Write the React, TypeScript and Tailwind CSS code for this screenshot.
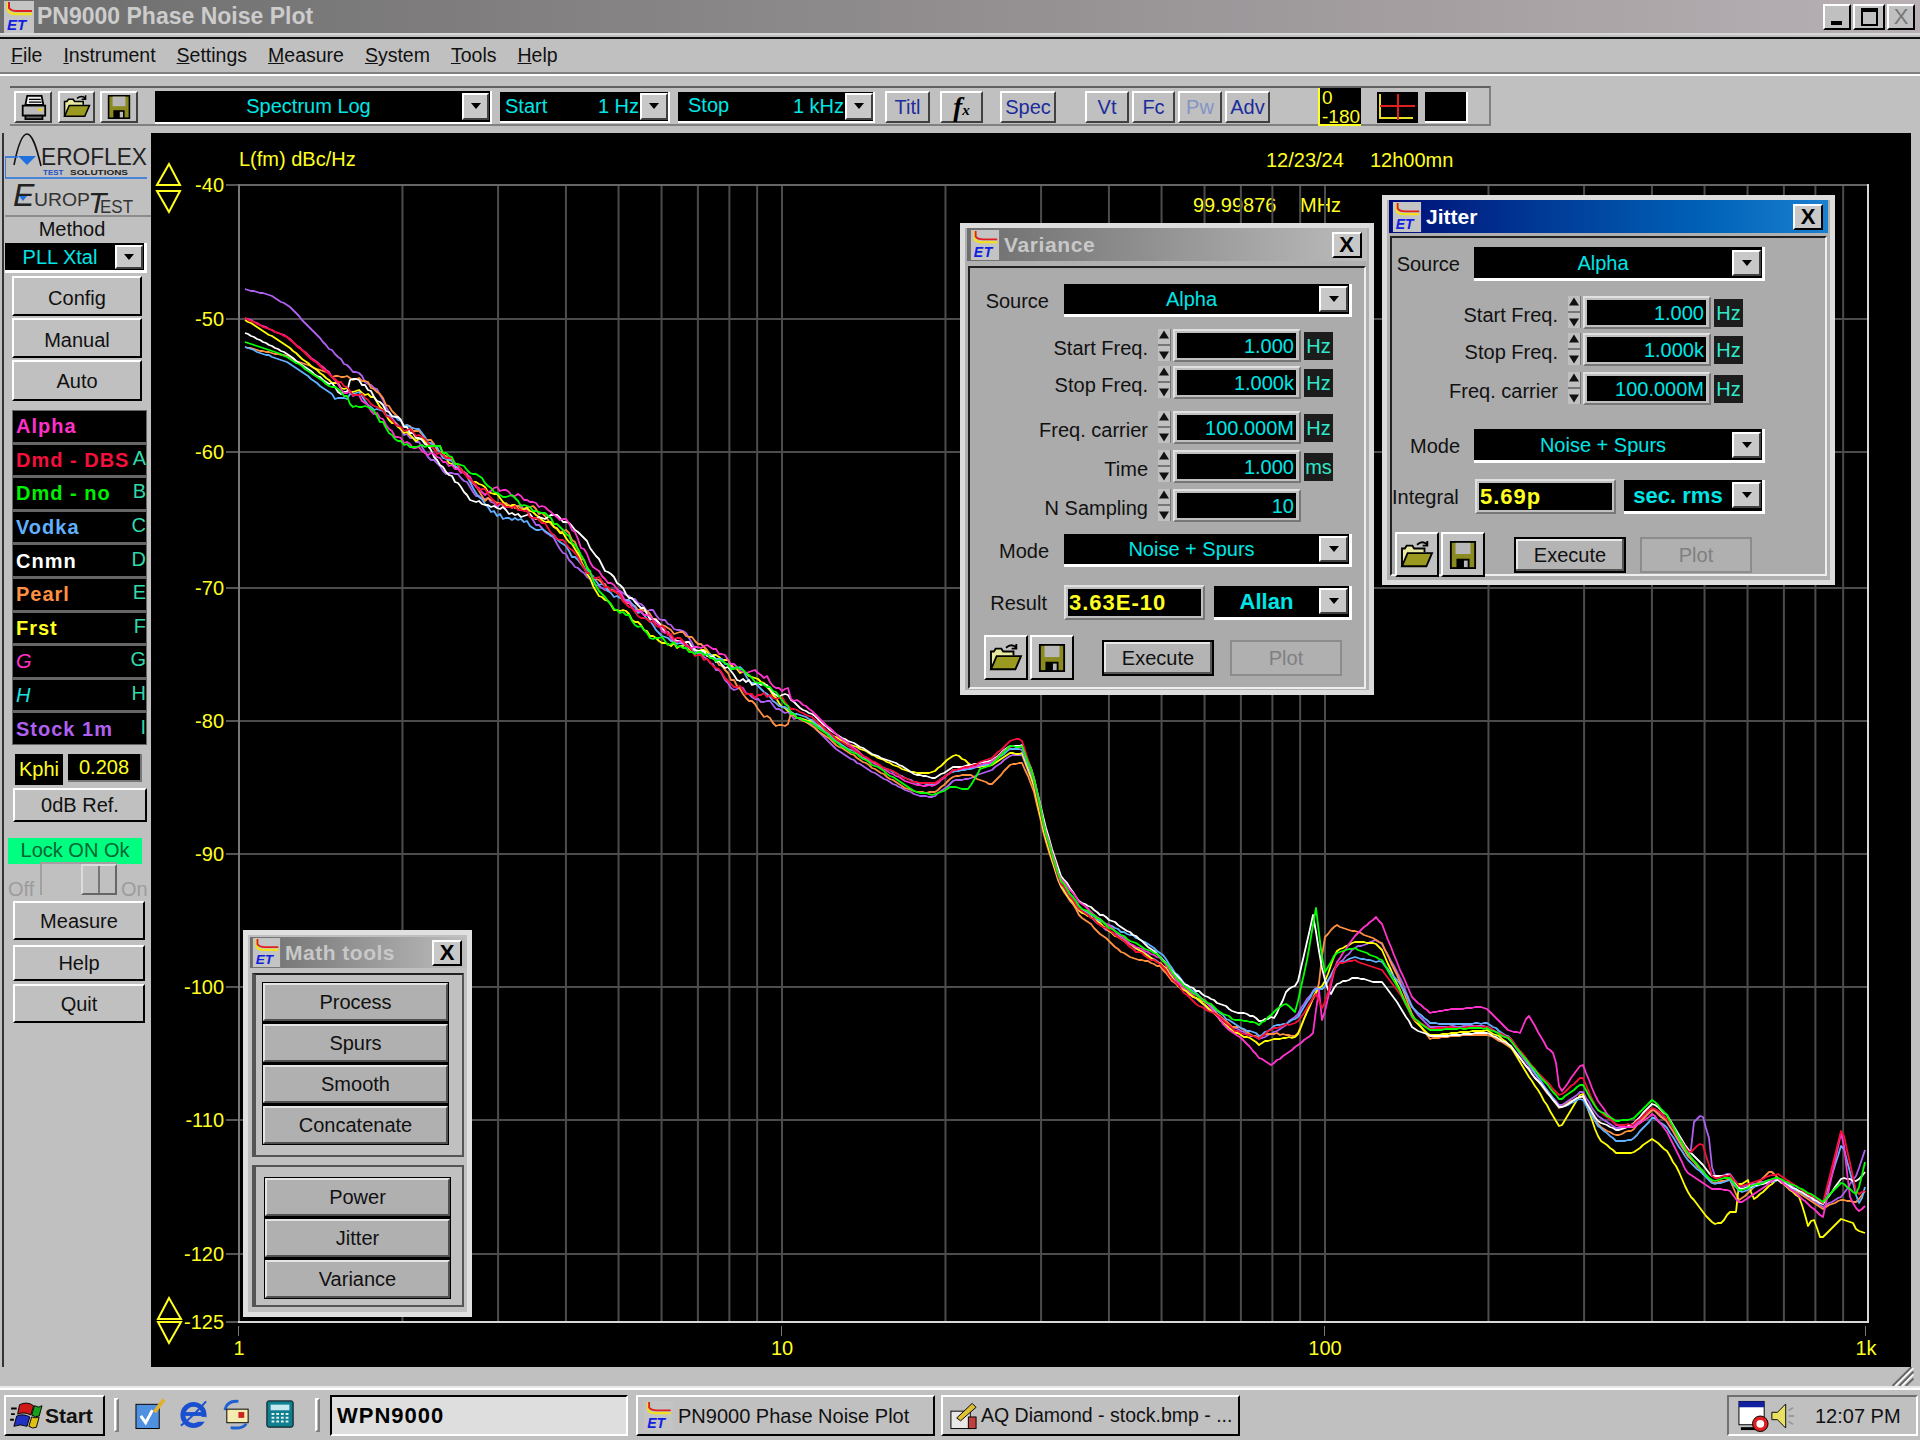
import type { ReactNode } from "react";

// ---- bevels used all over this old windows ui
const raised = "border-2 border-t-white border-l-white border-r-[#404040] border-b-[#404040]";
const raisedBlack = "border-2 border-t-white border-l-white border-r-black border-b-black";
const sunken = "border-2 border-t-[#707070] border-l-[#707070] border-r-white border-b-white";
const cyan = "text-[#00e6e6]";

// ---- plot data, everything in page pixels
const base: number[][] = [
  [245, 325], [287, 345], [333, 380], [375, 408], [395, 423], [437, 447], [479, 487], [528, 517], [567, 543],
  [594, 577], [632, 603], [670, 630], [708, 653], [747, 683], [777, 703], [812, 718], [838, 740], [876, 763],
  [915, 783], [934, 785], [953, 772], [972, 770], [991, 767], [1010, 752], [1022, 752], [1033, 780], [1045, 833],
  [1060, 883], [1079, 910], [1106, 927], [1133, 943], [1160, 957], [1183, 983], [1206, 1000], [1232, 1020],
  [1259, 1030], [1275, 1022], [1297, 1012], [1315, 985], [1324, 985], [1336, 962], [1355, 955], [1382, 962],
  [1400, 990], [1413, 1017], [1430, 1030], [1487, 1030], [1510, 1043], [1533, 1073], [1560, 1107], [1582, 1092],
  [1597, 1117], [1617, 1130], [1633, 1127], [1653, 1108], [1667, 1120], [1687, 1153], [1713, 1180], [1730, 1177],
  [1740, 1190], [1777, 1178], [1800, 1190], [1823, 1203], [1842, 1190], [1857, 1190], [1867, 1175],
];

const traces: { color: string; delta: number[][] }[] = [
  { color: "#b060f0", delta: [[245, -36], [268, -42], [291, -40], [318, -33], [337, -25], [364, -8], [400, 0], [760, 6], [930, 13], [990, 4], [1100, 2], [1280, 8], [1300, 0], [1336, 6], [1376, -20], [1430, -3], [1690, 0], [1694, -40], [1702, -57], [1709, -40], [1713, -5], [1842, 5], [1867, -30]] },
  { color: "#ff9040", delta: [[245, 22], [300, 8], [350, -12], [400, -6], [500, 2], [700, 6], [900, 10], [970, 6], [991, 20], [1007, 15], [1060, 2], [1106, 10], [1133, 15], [1200, 5], [1265, 6], [1297, 25], [1318, 10], [1324, -45], [1351, -25], [1382, -20], [1430, 7], [1510, 3], [1570, 0], [1600, 8], [1653, 3], [1730, 2], [1738, 10], [1770, -10], [1780, 2], [1867, 12]] },
  { color: "#ffff00", delta: [[245, -5], [300, 2], [450, 4], [700, 2], [800, -2], [900, -6], [957, -18], [975, -4], [1100, 5], [1200, 4], [1265, 15], [1297, 25], [1322, 0], [1336, -12], [1376, -18], [1400, 0], [1430, 7], [1500, 0], [1540, 10], [1560, 20], [1582, 0], [1600, 22], [1630, 25], [1653, 30], [1677, 30], [1690, 38], [1722, 43], [1737, 25], [1738, -5], [1748, -8], [1753, 15], [1777, 2], [1800, 10], [1808, 33], [1813, 22], [1820, 37], [1840, 28], [1853, 33], [1867, 58]] },
  { color: "#60b0ff", delta: [[245, 22], [300, 15], [370, 15], [400, 0], [590, 8], [800, 2], [930, 0], [985, 0], [1140, -5], [1297, 5], [1376, 2], [1406, -8], [1487, -8], [1540, -2], [1582, 6], [1597, 8], [1630, 12], [1653, 8], [1740, 2], [1823, 0], [1842, -50], [1860, 18], [1867, 5]] },
  { color: "#ffffff", delta: [[245, 8], [300, 8], [420, 0], [470, 10], [600, -4], [812, 0], [900, -10], [960, -4], [1106, -10], [1160, -2], [1252, -10], [1275, -5], [1286, -25], [1297, -28], [1313, -75], [1320, -30], [1330, 20], [1355, 22], [1374, 22], [1400, 17], [1430, 7], [1500, 2], [1560, 0], [1597, 2], [1653, -5], [1690, -5], [1760, 0], [1823, 3], [1842, -12], [1867, -5]] },
  { color: "#ff33cc", delta: [[245, -7], [287, -8], [333, -4], [430, 0], [520, -6], [610, -6], [700, -2], [900, 2], [1079, -6], [1106, -3], [1206, 5], [1250, 20], [1271, 38], [1297, 35], [1313, 45], [1319, 5], [1322, 35], [1336, 0], [1376, -45], [1400, -22], [1413, -20], [1430, -18], [1480, -23], [1510, -12], [1520, -22], [1528, -51], [1547, -41], [1555, -44], [1560, -12], [1582, -29], [1597, -17], [1617, -5], [1653, 5], [1687, 20], [1713, 10], [1737, 15], [1777, 0], [1823, 14], [1842, -63], [1850, 7], [1860, 25], [1867, 28]] },
  { color: "#f5103c", delta: [[245, -7], [287, -8], [333, -3], [500, -2], [700, 2], [950, -2], [1018, -12], [1040, 0], [1206, 8], [1250, 8], [1275, 5], [1305, 12], [1316, 10], [1322, 25], [1336, 3], [1382, 7], [1430, -3], [1487, -3], [1540, -5], [1582, -14], [1597, -6], [1653, -2], [1690, -5], [1702, -28], [1713, -2], [1777, -3], [1823, 2], [1842, -63], [1857, 5], [1867, 14]] },
  { color: "#00ff00", delta: [[245, 17], [300, 10], [340, 8], [420, 5], [520, 4], [700, 4], [880, 2], [930, 8], [968, 18], [980, 0], [1010, -6], [1200, 0], [1232, -2], [1265, -5], [1285, -15], [1295, -2], [1308, -40], [1316, -77], [1324, -10], [1400, 0], [1653, -8], [1700, 0], [1823, 0], [1842, -8], [1857, 5], [1867, -22]] },
];

const lerp = (pts: number[][], x: number) => {
  if (x <= pts[0][0]) return pts[0][1];
  for (let i = 1; i < pts.length; i++) {
    if (x <= pts[i][0]) {
      const t = (x - pts[i - 1][0]) / (pts[i][0] - pts[i - 1][0]);
      return pts[i - 1][1] + (pts[i][1] - pts[i - 1][1]) * t;
    }
  }
  return pts[pts.length - 1][1];
};

const noiseAmp = (x: number) => (x < 330 ? 0.5 : x < 800 ? 7 : x < 1040 ? 1.2 : x < 1300 ? 2.4 : 0.9);
const slowAmp = (x: number) => (x < 350 ? 0 : x < 790 ? 8 : 1);

function tracePath(delta: number[][], idx: number) {
  let seed = 7919 * (idx + 3);
  let walk = 0;
  const out: string[] = [];
  for (let x = 245; x <= 1867; x += 3) {
    seed = (seed * 16807) % 2147483647;
    walk = walk * 0.9 + (seed / 2147483647 - 0.5) * noiseAmp(x);
    const wob = Math.sin(x / (22 + idx * 3) + idx * 1.7) + 0.6 * Math.sin(x / (61 - idx * 4) + idx);
    const y = lerp(base, x) + lerp(delta, x) + walk + wob * slowAmp(x);
    out.push(`${x},${Math.round(y)}`);
  }
  return "M" + out.join("L");
}

// plot grid
const decadeX = (n: number) => 239 + 543 * Math.log10(n);
const gridX: number[] = [];
[1, 10, 100].forEach((d) => {
  for (let i = 1; i < 10; i++) if (d * i > 1) gridX.push(decadeX(d * i));
});
gridX.push(decadeX(100));
const yLabels: [string, number][] = [
  ["-40", 185], ["-50", 319], ["-60", 452], ["-70", 588], ["-80", 721], ["-90", 854], ["-100", 987], ["-110", 1120], ["-120", 1254], ["-125", 1322],
];

// ---- icons
const AppIcon = ({ className }: { className: string }) => (
  <svg viewBox="0 0 30 32" className={className}>
    <rect width="30" height="32" fill="#c4c4c4" />
    <path d="M4 1V9Q5 13 12 13H28" fill="none" stroke="#f0e020" strokeWidth="2.5" />
    <path d="M5 1V7Q7 10 13 10H28" fill="none" stroke="#e02020" strokeWidth="2" />
    <text x="3" y="29" fill="#1020e0" fontSize="15" fontStyle="italic" fontWeight="bold" fontFamily="Liberation Sans">ET</text>
  </svg>
);

const Arrow = () => (
  <svg viewBox="0 0 10 6" className="w-[10px] h-[6px]">
    <polygon points="0,0 10,0 5,6" fill="#000" />
  </svg>
);

const Folder = ({ className }: { className: string }) => (
  <svg viewBox="0 0 36 32" className={className}>
    <path d="M2 28V9H5L7 6H13L15 9H26V13" fill="#e8e8a0" stroke="#000" strokeWidth="2" />
    <path d="M2 28L8 14H34L28 28Z" fill="#9a9a20" stroke="#000" strokeWidth="2" />
    <path d="M18 5Q24 0 29 5M29 1V6H24" fill="none" stroke="#000" strokeWidth="2" />
  </svg>
);

const Floppy = ({ className }: { className: string }) => (
  <svg viewBox="0 0 30 32" className={className}>
    <rect x="2" y="2" width="26" height="28" fill="#8a8a20" stroke="#000" strokeWidth="2" />
    <rect x="7" y="3" width="16" height="12" fill="#b8b8b8" />
    <rect x="8" y="20" width="14" height="10" fill="#000" />
    <rect x="16" y="22" width="4" height="7" fill="#b8b8b8" />
  </svg>
);

const Printer = () => (
  <svg viewBox="0 0 30 30" className="w-[27px] h-[27px]">
    <path d="M8 2H24L26 12H6Z" fill="#eee" stroke="#000" strokeWidth="2" />
    <path d="M10 6H23M10 9H24" stroke="#000" strokeWidth="1.5" />
    <path d="M3 13H28V24H3Z" fill="#bbb" stroke="#000" strokeWidth="2" />
    <path d="M6 24H25V28H6Z" fill="#666" stroke="#000" strokeWidth="2" />
    <rect x="20" y="16" width="5" height="3" fill="#e8d020" />
  </svg>
);

// ---- small widgets
const Btn = ({ children, className = "" }: { children: ReactNode; className?: string }) => (
  <div className={`${raisedBlack} bg-[#c0c0c0] flex items-center justify-center text-[20px] text-[#111] ${className}`}>{children}</div>
);

const ToolBtn = ({ children, className = "" }: { children: ReactNode; className?: string }) => (
  <div className={`${raised} bg-[#c0c0c0] h-[32px] flex items-center justify-center text-[20px] text-[#1c2c9c] ${className}`}>{children}</div>
);

const DropBtn = ({ className = "" }: { className?: string }) => (
  <div className={`${raised} bg-[#c8c8c8] shrink-0 flex items-center justify-center ${className}`}>
    <Arrow />
  </div>
);

const Select = ({ text, className = "", bold = false }: { text: string; className?: string; bold?: boolean }) => (
  <div className={`bg-black border-r-[3px] border-b-[3px] border-white flex items-center ${className}`}>
    <span className={`flex-1 text-center ${cyan} ${bold ? "font-bold text-[22px]" : "text-[20px]"}`}>{text}</span>
    <DropBtn className="w-[29px] h-[26px] mr-[1px]" />
  </div>
);

const Spinner = () => (
  <div className="w-[13px] h-[32px] ml-[10px] bg-[#c0c0c0] flex flex-col items-center justify-between py-[1px] border-r border-[#777]">
    <svg viewBox="0 0 10 8" className="w-[10px] h-[9px]"><polygon points="0,8 10,8 5,0" fill="#111" /></svg>
    <div className="w-full h-[2px] bg-[#777]" />
    <svg viewBox="0 0 10 8" className="w-[10px] h-[9px]"><polygon points="0,0 10,0 5,8" fill="#111" /></svg>
  </div>
);

const FreqRow = ({ label, value, unit, labelW, className = "" }: { label: string; value: string; unit?: string; labelW: string; className?: string }) => (
  <div className={`flex items-start h-[33px] ${className}`}>
    <span className={`${labelW} text-right text-[20px] text-[#111] h-[33px] leading-[38px]`}>{label}</span>
    <Spinner />
    <div className="ml-[2px] w-[128px] h-[33px] bg-[#c0c0c0] border-2 border-t-[#e0e0e0] border-l-[#e0e0e0] border-r-[#777] border-b-[#777] p-[2px] pr-[3px]">
      <div className={`bg-black h-full text-right text-[20px] leading-[27px] pr-[2px] ${cyan}`}>{value}</div>
    </div>
    {unit && <div className="ml-[3px] mt-[3px] w-[29px] h-[28px] bg-[#1c1c1c] text-[#30e8c8] text-[20px] leading-[28px] text-center">{unit}</div>}
  </div>
);

const ResultField = ({ value }: { value: string }) => (
  <div className="w-[141px] h-[35px] bg-[#c0c0c0] border-2 border-t-[#e0e0e0] border-l-[#e0e0e0] border-r-[#777] border-b-[#777] p-[2px]">
    <div className="bg-black h-full pl-[1px] text-[22px] leading-[27px] font-bold text-[#ffff20] tracking-[1px]">{value}</div>
  </div>
);

const WinButtons = ({ execMl, plotMl, className = "" }: { execMl: string; plotMl: string; className?: string }) => (
  <div className={`flex items-center ${className}`}>
    <div className={`${raisedBlack} bg-[#c0c0c0] w-[44px] h-[45px] flex items-center justify-center`}><Folder className="w-[34px] h-[30px]" /></div>
    <div className={`${raisedBlack} bg-[#c0c0c0] w-[44px] h-[45px] flex items-center justify-center ml-[2px]`}><Floppy className="w-[28px] h-[30px]" /></div>
    <div className={`${execMl} w-[112px] h-[36px] bg-[#b4b4b4] border-2 border-black flex items-center justify-center text-[20px] text-[#111] shadow-[inset_-2px_-2px_0_#555,inset_2px_2px_0_#e8e8e8]`}>Execute</div>
    <div className={`${plotMl} w-[112px] h-[36px] bg-[#b0b0b0] border-2 border-[#8c8c8c] flex items-center justify-center text-[20px] text-[#808080]`}>Plot</div>
  </div>
);

const CloseBtn = ({ className = "" }: { className?: string }) => (
  <div className={`${raisedBlack} bg-[#c8c8c8] w-[30px] h-[26px] flex items-center justify-center text-[22px] font-bold leading-none text-black ${className}`}>X</div>
);

const Title = ({ text, active = false }: { text: string; active?: boolean }) => (
  <div className={`h-[33px] mx-[2px] flex items-center pl-[3px] pr-[5px] bg-gradient-to-r ${active ? "from-[#000a78] to-[#1a80d0] text-white" : "from-[#6e6e6e] to-[#bcbcbc] text-[#c8c8c8] tracking-[0.6px]"}`}>
    <AppIcon className="w-[30px] h-[30px]" />
    <span className="ml-[4px] text-[21px] font-bold flex-1">{text}</span>
    <CloseBtn />
  </div>
);

// ---- the two floating dialogs
const VarianceWin = () => (
  <div className="absolute left-[960px] top-[223px] w-[414px] h-[472px] bg-[#b0b0b0] border-[5px] border-[#dcdcdc]">
    <Title text="Variance" />
    <div className={`mt-[5px] mx-[3px] h-[423px] bg-[#ababab] border-2 border-t-[#222] border-l-[#222] border-r-[#eee] border-b-[#eee] pt-[16px]`}>
      <div className="flex items-center h-[33px]">
        <span className="w-[79px] text-right text-[20px] text-[#111]">Source</span>
        <Select text="Alpha" className="ml-[15px] w-[288px] h-[33px]" />
      </div>
      <FreqRow label="Start Freq." value="1.000" unit="Hz" labelW="w-[178px]" className="mt-[12px]" />
      <FreqRow label="Stop Freq." value="1.000k" unit="Hz" labelW="w-[178px]" className="mt-[4px]" />
      <FreqRow label="Freq. carrier" value="100.000M" unit="Hz" labelW="w-[178px]" className="mt-[12px]" />
      <FreqRow label="Time" value="1.000" unit="ms" labelW="w-[178px]" className="mt-[6px]" />
      <FreqRow label="N Sampling" value="10" labelW="w-[178px]" className="mt-[6px]" />
      <div className="flex items-center mt-[12px] h-[33px]">
        <span className="w-[79px] text-right text-[20px] text-[#111]">Mode</span>
        <Select text="Noise + Spurs" className="ml-[15px] w-[288px] h-[33px]" />
      </div>
      <div className="flex items-center mt-[18px]">
        <span className="w-[77px] text-right text-[20px] text-[#111]">Result</span>
        <div className="ml-[17px]"><ResultField value="3.63E-10" /></div>
        <Select text="Allan" bold className="ml-[9px] w-[138px] h-[34px]" />
      </div>
      <WinButtons execMl="ml-[28px]" plotMl="ml-[16px]" className="ml-[14px] mt-[15px]" />
    </div>
  </div>
);

const JitterWin = () => (
  <div className="absolute left-[1382px] top-[195px] w-[453px] h-[390px] bg-[#b0b0b0] border-[5px] border-[#dcdcdc]">
    <Title text="Jitter" active />
    <div className="mt-[3px] mx-[3px] h-[340px] bg-[#ababab] border-2 border-t-[#222] border-l-[#222] border-r-[#eee] border-b-[#eee] pt-[9px]">
      <div className="flex items-center h-[34px]">
        <span className="w-[68px] text-right text-[20px] text-[#111]">Source</span>
        <Select text="Alpha" className="ml-[14px] w-[291px] h-[34px]" />
      </div>
      <FreqRow label="Start Freq." value="1.000" unit="Hz" labelW="w-[166px]" className="mt-[15px]" />
      <FreqRow label="Stop Freq." value="1.000k" unit="Hz" labelW="w-[166px]" className="mt-[4px]" />
      <FreqRow label="Freq. carrier" value="100.000M" unit="Hz" labelW="w-[166px]" className="mt-[6px]" />
      <div className="flex items-center mt-[24px] h-[34px]">
        <span className="w-[68px] text-right text-[20px] text-[#111]">Mode</span>
        <Select text="Noise + Spurs" className="ml-[14px] w-[291px] h-[34px]" />
      </div>
      <div className="flex items-center mt-[16px]">
        <span className="w-[66px] text-right text-[20px] text-[#111]">Integral</span>
        <div className="ml-[17px]"><ResultField value="5.69p" /></div>
        <Select text="sec. rms" bold className="ml-[8px] w-[141px] h-[34px]" />
      </div>
      <WinButtons execMl="ml-[29px]" plotMl="ml-[14px]" className="ml-[3px] mt-[18px]" />
    </div>
  </div>
);

const MathBtn = ({ text }: { text: string }) => (
  <div className="h-[38px] w-full bg-[#b0b0b0] border-2 border-t-[#e4e4e4] border-l-[#e4e4e4] border-r-[#505050] border-b-[#505050] flex items-center justify-center text-[20px] text-[#111]">{text}</div>
);

const MathWin = () => (
  <div className="absolute left-[243px] top-[930px] w-[229px] h-[387px] bg-[#c0c0c0] border-[5px] border-[#e0e0e0]">
    <div className="h-[31px] mt-[2px] mx-[2px] flex items-center pl-[2px] pr-[3px] bg-gradient-to-r from-[#6e6e6e] to-[#bcbcbc]">
      <AppIcon className="w-[29px] h-[29px]" />
      <span className="ml-[4px] text-[21px] font-bold text-[#c8c8c8] flex-1 tracking-[0.5px]">Math tools</span>
      <CloseBtn />
    </div>
    <div className="mt-[5px] ml-[4px] w-[212px] h-[184px] border-2 border-l-[4px] border-[#555] border-t-[#222] pt-[7px]">
      <div className="ml-[6px] w-[187px] bg-black p-[1px] flex flex-col gap-[3px]">
        <MathBtn text="Process" />
        <MathBtn text="Spurs" />
        <MathBtn text="Smooth" />
        <MathBtn text="Concatenate" />
      </div>
    </div>
    <div className="mt-[8px] ml-[4px] w-[212px] h-[142px] border-2 border-l-[4px] border-[#555] pt-[10px]">
      <div className="ml-[8px] w-[187px] bg-black p-[1px] flex flex-col gap-[3px]">
        <MathBtn text="Power" />
        <MathBtn text="Jitter" />
        <MathBtn text="Variance" />
      </div>
    </div>
  </div>
);

// ---- left column
const rows = [
  { name: "Alpha", cls: "text-[#ff30c8] font-bold", key: "" },
  { name: "Dmd - DBS", cls: "text-[#f5103c] font-bold", key: "A" },
  { name: "Dmd - no", cls: "text-[#00f000] font-bold", key: "B" },
  { name: "Vodka", cls: "text-[#60b0ff] font-bold", key: "C" },
  { name: "Cnmn", cls: "text-white font-bold", key: "D" },
  { name: "Pearl", cls: "text-[#ff9040] font-bold", key: "E" },
  { name: "Frst", cls: "text-[#ffff20] font-bold", key: "F" },
  { name: "G", cls: "text-[#ff30c8] italic", key: "G" },
  { name: "H", cls: "text-[#20e0e0] italic", key: "H" },
  { name: "Stock 1m", cls: "text-[#b060f0] font-bold", key: "I" },
];

const Logo = () => (
  <svg viewBox="5 133 146 84" className="w-[146px] h-[84px] block">
    <path d="M14 165C18 145 22 134 27 134C32 134 36 145 41 166" fill="none" stroke="#111" strokeWidth="1.6" />
    <path d="M5 157V178H147" fill="none" stroke="#2070e0" strokeWidth="1.6" />
    <path d="M5 157H18" fill="none" stroke="#2070e0" strokeWidth="1.6" />
    <polygon points="18,156 36,156 27,165" fill="#2070e0" />
    <text x="41" y="165" fontSize="24" textLength="106" lengthAdjust="spacingAndGlyphs" fill="#222">EROFLEX</text>
    <text x="43" y="175" fontSize="8" fontWeight="bold" fill="#1d50c0">TEST</text>
    <text x="70" y="175" fontSize="8" fontWeight="bold" textLength="58" lengthAdjust="spacingAndGlyphs" fill="#222">SOLUTIONS</text>
    <text x="13" y="206" fontSize="32" fontStyle="italic" fill="#222">E</text>
    <polygon points="19,196 27,196 23,201" fill="#2070e0" />
    <text x="34" y="206" fontSize="19" textLength="56" lengthAdjust="spacingAndGlyphs" fill="#333">UROP</text>
    <text x="88" y="213" fontSize="30" fontStyle="italic" fill="#222">T</text>
    <text x="100" y="213" fontSize="19" textLength="33" lengthAdjust="spacingAndGlyphs" fill="#333">EST</text>
    <rect x="5" y="215" width="146" height="2" fill="#8c8c8c" />
  </svg>
);

const Sidebar = () => (
  <div className="w-[146px] shrink-0 text-[20px] text-[#111]">
    <Logo />
    <div className="h-[26px] leading-[24px] text-center pr-[12px]">Method</div>
    <div className="w-[142px] h-[30px] bg-black border-r-[3px] border-b-[3px] border-white flex items-center">
      <span className={`flex-1 text-center ${cyan}`}>PLL Xtal</span>
      <DropBtn className="w-[28px] h-[24px] mr-[1px]" />
    </div>
    <Btn className="mt-[3px] ml-[7px] w-[130px] h-[40px] pt-[3px]">Config</Btn>
    <Btn className="mt-[2px] ml-[7px] w-[130px] h-[40px] pt-[3px]">Manual</Btn>
    <Btn className="mt-[2px] ml-[7px] w-[130px] h-[41px]">Auto</Btn>
    <div className="mt-[9px] ml-[7px] w-[135px] h-[335px] bg-[#666] border border-[#666] flex flex-col gap-[3px]">
      {rows.map((r) => (
        <div key={r.name} className="flex-1 bg-black flex items-center justify-between pl-[3px]">
          <span className={`${r.cls} tracking-[1px]`}>{r.name}</span>
          <span className="text-[#30d8a8] leading-none mb-[4px]">{r.key}</span>
        </div>
      ))}
    </div>
    <div className="flex items-start mt-[9px] ml-[10px]">
      <div className="w-[48px] h-[31px] bg-black text-[#ffff20] text-center leading-[30px]">Kphi</div>
      <div className="ml-[5px] w-[74px] h-[28px] bg-black border-r-2 border-b-2 border-[#777] text-[#ffff20] text-center leading-[26px]">0.208</div>
    </div>
    <Btn className="mt-[3px] ml-[8px] w-[134px] h-[34px]">0dB Ref.</Btn>
    <div className="mt-[16px] ml-[3px] w-[134px] h-[26px] bg-[#00ff80] text-center leading-[25px] text-[#063]">Lock ON Ok</div>
    <div className="h-[37px] flex items-end ml-[3px] text-[#9c9c9c] pb-[1px]">
      <span className="w-[32px] leading-[22px]">Off</span>
      <div className="flex justify-end w-[77px] h-[33px] mb-[5px] border-l-2 border-t-2 border-[#a0a0a0]">
        <div className="h-full w-[36px] border-2 border-[#dcdcdc] border-b-[#666] border-r-[#666]">
          <div className="ml-[15px] h-full w-[2px] bg-[#777]" />
        </div>
      </div>
      <span className="ml-[4px] leading-[22px]">On</span>
    </div>
    <Btn className="ml-[8px] w-[132px] h-[39px]">Measure</Btn>
    <Btn className="mt-[5px] ml-[8px] w-[132px] h-[36px]">Help</Btn>
    <Btn className="mt-[3px] ml-[8px] w-[132px] h-[39px]">Quit</Btn>
  </div>
);

// ---- chart
const Plot = () => (
  <div className="flex-1 bg-black">
    <svg viewBox="151 133 1760 1234" className="w-full h-full block" fontFamily="Liberation Sans" fontSize="20" fill="#ffff20">
      <text x="239" y="166">L(fm) dBc/Hz</text>
      <text x="1266" y="167">12/23/24</text>
      <text x="1370" y="167">12h00mn</text>
      <text x="1193" y="212">99.99876</text>
      <text x="1300" y="212">MHz</text>
      <g fill="none" stroke="#ffff20" strokeWidth="2">
        <polygon points="169,164 157,185 180,185" />
        <polygon points="169,212 157,191 180,191" />
        <polygon points="169,1298 158,1319 181,1319" />
        <polygon points="169,1343 158,1322 181,1322" />
      </g>
      {yLabels.map(([t, y]) => (
        <g key={t}>
          <rect x="226" y={y - 1} width="12" height="2" fill="#555" />
          {y > 185 && y < 1322 && <rect x="239" y={y - 1} width="1629" height="2" fill="#4c4c4c" />}
          <text x="224" y={y + 7} textAnchor="end">{t}</text>
        </g>
      ))}
      {gridX.map((x) => (
        <rect key={x} x={x - 1} y="185" width="2" height="1137" fill="#4c4c4c" />
      ))}
      <rect x="238" y="184" width="1630" height="2" fill="#666" />
      <rect x="238" y="184" width="2" height="1138" fill="#777" />
      <rect x="1867" y="184" width="2" height="1139" fill="#d8d8d8" />
      <rect x="238" y="1321" width="1631" height="2" fill="#d8d8d8" />
      {[239, 782, 1325, 1866].map((x) => (
        <rect key={x} x={x - 1} y="1326" width="1" height="10" fill="#777" />
      ))}
      <text x="239" y="1355" textAnchor="middle">1</text>
      <text x="782" y="1355" textAnchor="middle">10</text>
      <text x="1325" y="1355" textAnchor="middle">100</text>
      <text x="1866" y="1355" textAnchor="middle">1k</text>
      {traces.map((t, i) => (
        <path key={t.color} d={tracePath(t.delta, i)} fill="none" stroke={t.color} strokeWidth="1.8" strokeLinejoin="round" />
      ))}
    </svg>
  </div>
);

// ---- taskbar bits
const Handle = () => <div className="w-[5px] h-[34px] border-2 border-t-white border-l-white border-r-[#808080] border-b-[#808080]" />;

const StartLogo = () => (
  <svg viewBox="0 0 36 32" className="w-[34px] h-[30px]">
    <path d="M10 4Q18 0 25 5L22 15Q15 11 8 14Z" fill="#d01818" stroke="#000" />
    <path d="M26 5Q31 8 34 5L31 16Q27 18 23 15Z" fill="#18a018" stroke="#000" />
    <path d="M7 16Q14 13 21 17L18 27Q11 24 4 27Z" fill="#2030c0" stroke="#000" />
    <path d="M23 17Q27 19 31 17L28 28Q24 30 20 27Z" fill="#e0c010" stroke="#000" />
    <path d="M1 8H7M1 14H5M0 20H4" stroke="#000" strokeWidth="2" />
  </svg>
);

const QuickIcons = () => (
  <>
    <svg viewBox="0 0 32 32" className="ml-[16px] w-[31px] h-[32px]">
      <rect x="1" y="6" width="24" height="25" fill="#5090e0" stroke="#000" />
      <path d="M6 18L11 25L18 12" fill="none" stroke="#fff" strokeWidth="3" />
      <path d="M20 14L30 1" stroke="#e0b030" strokeWidth="4" />
    </svg>
    <svg viewBox="0 0 32 32" className="ml-[12px] w-[31px] h-[32px]">
      <ellipse cx="16" cy="17" rx="11" ry="11" fill="none" stroke="#1a50d0" strokeWidth="5" />
      <path d="M6 16H27" stroke="#1a50d0" strokeWidth="4" />
      <rect x="17" y="19" width="12" height="5" fill="#c0c0c0" />
      <path d="M3 28Q14 20 29 3" fill="none" stroke="#1a50d0" strokeWidth="2" />
    </svg>
    <svg viewBox="0 0 32 32" className="ml-[12px] w-[31px] h-[32px]">
      <path d="M4 12Q6 2 18 3" fill="none" stroke="#2060d0" strokeWidth="3" />
      <rect x="6" y="11" width="22" height="14" fill="#f4ecb0" stroke="#000" />
      <rect x="18" y="14" width="6" height="6" fill="#d02020" />
      <path d="M26 26Q22 32 10 30" fill="none" stroke="#2060d0" strokeWidth="3" />
    </svg>
    <svg viewBox="0 0 32 32" className="ml-[13px] w-[30px] h-[32px]">
      <rect x="2" y="2" width="28" height="28" rx="2" fill="#108090" stroke="#000" />
      <rect x="6" y="6" width="20" height="6" fill="#c8e8f0" />
      <path d="M7 16H25M7 20H25M7 24H25" stroke="#e0f0f0" strokeWidth="2" strokeDasharray="3 2" />
    </svg>
  </>
);

const TaskBtn = ({ children, className = "" }: { children: ReactNode; className?: string }) => (
  <div className={`${raisedBlack} bg-[#c0c0c0] h-[41px] flex items-center text-[20px] text-[#111] whitespace-nowrap ${className}`}>{children}</div>
);

export default function App() {
  return (
    <div className="relative w-[1920px] h-[1440px] overflow-hidden bg-[#c0c0c0] font-['Liberation_Sans',sans-serif] flex flex-col">
      {/* title bar */}
      <div className="h-[33px] flex items-center bg-gradient-to-r from-[#6e6e6e] to-[#b8b0b4] pl-[4px] pr-[5px] shrink-0">
        <AppIcon className="w-[30px] h-[32px]" />
        <span className="ml-[3px] text-[23px] font-bold text-[#cccccc] flex-1">PN9000 Phase Noise Plot</span>
        <div className={`${raisedBlack} bg-[#c0c0c0] w-[28px] h-[26px] flex items-end pl-[6px] pb-[3px]`}><div className="w-[11px] h-[4px] bg-black" /></div>
        <div className={`${raisedBlack} bg-[#c0c0c0] w-[32px] h-[26px] ml-[2px] flex items-center justify-center`}><div className="w-[17px] h-[18px] border-2 border-t-[4px] border-black" /></div>
        <div className={`${raisedBlack} bg-[#c0c0c0] w-[28px] h-[26px] ml-[2px] flex items-center justify-center text-[22px] text-[#777]`}>X</div>
      </div>
      <div className="h-[6px] shrink-0 border-b-2 border-[#111] border-t-2 border-t-[#d8d8d8]" />

      {/* menu */}
      <div className="h-[33px] shrink-0 flex items-center pl-[11px] gap-[21px] text-[19.5px] text-[#111]">
        <span><u>F</u>ile</span>
        <span><u>I</u>nstrument</span>
        <span><u>S</u>ettings</span>
        <span><u>M</u>easure</span>
        <span><u>S</u>ystem</span>
        <span><u>T</u>ools</span>
        <span><u>H</u>elp</span>
      </div>
      <div className="h-[4px] shrink-0 border-t-2 border-t-[#808080] border-b-2 border-b-white" />

      {/* toolbar */}
      <div className="mt-[10px] ml-[10px] w-[1481px] h-[40px] shrink-0 border-y-2 border-t-[#606060] border-b-[#808080] border-r-2 border-r-[#808080] flex items-center pt-[2px]">
        <ToolBtn className="ml-[4px] w-[38px]"><Printer /></ToolBtn>
        <ToolBtn className="ml-[6px] w-[37px]"><Folder className="w-[28px] h-[26px]" /></ToolBtn>
        <ToolBtn className="ml-[5px] w-[38px]"><Floppy className="w-[24px] h-[26px]" /></ToolBtn>
        <div className="ml-[17px] w-[337px] h-[33px] bg-black flex items-center border-r-2 border-b-2 border-white">
          <span className={`flex-1 text-center text-[20px] ${cyan}`}>Spectrum Log</span>
          <DropBtn className="w-[27px] h-[27px] mr-[1px]" />
        </div>
        <div className="ml-[8px] w-[170px] h-[31px] bg-black flex items-center border-r-2 border-b-2 border-white text-[20px] pl-[5px]">
          <span className={`${cyan} flex-1`}>Start</span>
          <span className={cyan}>1 Hz</span>
          <DropBtn className="w-[28px] h-[27px] ml-[1px]" />
        </div>
        <div className="ml-[8px] w-[197px] h-[31px] bg-black flex items-center border-r-2 border-b-2 border-white text-[20px] pl-[10px]">
          <span className={`${cyan} flex-1 -mt-[3px]`}>Stop</span>
          <span className={cyan}>1 kHz</span>
          <DropBtn className="w-[28px] h-[27px] ml-[1px]" />
        </div>
        <ToolBtn className="ml-[10px] w-[45px]">Titl</ToolBtn>
        <ToolBtn className="ml-[10px] w-[43px] !text-black font-['Liberation_Serif',serif] italic font-bold">
          <span className="text-[27px] leading-none">f</span>
          <span className="text-[15px] mt-[6px]">x</span>
        </ToolBtn>
        <ToolBtn className="ml-[17px] w-[56px]">Spec</ToolBtn>
        <ToolBtn className="ml-[29px] w-[44px]">Vt</ToolBtn>
        <ToolBtn className="ml-[3px] w-[43px]">Fc</ToolBtn>
        <ToolBtn className="ml-[3px] w-[44px] !text-[#8494c4]">Pw</ToolBtn>
        <ToolBtn className="ml-[3px] w-[45px]">Adv</ToolBtn>
        <div className="ml-[48px] w-[43px] h-[38px] bg-black border-l-2 border-b-2 border-[#ffff20] text-[#ffff20] text-[19px] leading-[19px] pl-[2px]">0<br />-180</div>
        <svg viewBox="0 0 41 31" className="ml-[16px] w-[41px] h-[31px]">
          <rect width="41" height="31" fill="#000" />
          <path d="M3 2V26H36" fill="none" stroke="#e8e020" strokeWidth="2" />
          <path d="M3 14H38M21 2V28" stroke="#e02020" strokeWidth="2" />
        </svg>
        <div className="ml-[7px] w-[43px] h-[31px] bg-black border-r-2 border-b-2 border-white" />
      </div>

      {/* main area */}
      <div className="mt-[7px] h-[1234px] shrink-0 flex ml-[2px] border-l-2 border-[#333] pl-[1px]">
        <Sidebar />
        <Plot />
        <div className="w-[9px]" />
      </div>

      {/* status strip */}
      <div className="h-[21px] shrink-0 flex justify-end pr-[6px] border-b-2 border-[#e8e8e8]">
        <svg viewBox="0 0 24 20" className="w-[24px] h-[19px]">
          <path d="M2 20L22 0M9 20L24 5M16 20L24 12" stroke="#666" strokeWidth="2" />
          <path d="M5 20L24 1M12 20L24 8" stroke="#fff" strokeWidth="1.5" />
        </svg>
      </div>

      {/* taskbar */}
      <div className="flex-1 border-t-2 border-white flex items-start pt-[5px] pl-[4px]">
        <TaskBtn className="w-[101px] pl-[4px] gap-[1px] font-bold !text-[21px]"><StartLogo />Start</TaskBtn>
        <div className="ml-[9px] mt-[3px]"><Handle /></div>
        <div className="flex items-center mt-[3px]"><QuickIcons /></div>
        <div className="ml-[20px] mt-[3px]"><Handle /></div>
        <div className="ml-[10px] w-[298px] h-[41px] bg-[#dedede] border-2 border-t-black border-l-black border-r-white border-b-white flex items-center pl-[5px] font-bold text-[22px] tracking-[1px] text-black">WPN9000</div>
        <TaskBtn className="ml-[8px] w-[299px] pl-[6px] gap-[5px]"><AppIcon className="w-[29px] h-[30px]" />PN9000 Phase Noise Plot</TaskBtn>
        <TaskBtn className="ml-[6px] w-[299px] pl-[6px] gap-[3px] !text-[19.5px] overflow-hidden">
          <svg viewBox="0 0 30 30" className="w-[29px] h-[30px] shrink-0">
            <rect x="2" y="10" width="20" height="18" fill="#e8e8e8" stroke="#000" />
            <path d="M8 17L24 2L28 6L12 20Z" fill="#e0c030" stroke="#000" />
            <rect x="20" y="16" width="8" height="12" fill="#c04040" stroke="#000" />
          </svg>
          AQ Diamond - stock.bmp - ...
        </TaskBtn>
        <div className={`ml-[487px] w-[191px] h-[41px] ${sunken} flex items-center pl-[8px] text-[20px] text-[#111]`}>
          <svg viewBox="0 0 34 34" className="w-[33px] h-[34px]">
            <rect x="2" y="2" width="26" height="24" fill="#fff" stroke="#000" />
            <rect x="2" y="2" width="26" height="6" fill="#1020a0" />
            <path d="M4 30H24" stroke="#000" strokeWidth="3" />
            <circle cx="24" cy="25" r="8" fill="#e02020" stroke="#000" />
            <circle cx="24" cy="25" r="4" fill="#fff" />
          </svg>
          <svg viewBox="0 0 26 32" className="w-[24px] h-[32px]">
            <polygon points="2,12 8,12 17,3 17,29 8,20 2,20" fill="#e8e060" stroke="#000" />
            <path d="M20 10L25 7M20 16H26M20 22L25 25" stroke="#999" strokeWidth="2" />
          </svg>
          <span className="ml-[21px]">12:07 PM</span>
        </div>
      </div>

      <MathWin />
      <VarianceWin />
      <JitterWin />
    </div>
  );
}
